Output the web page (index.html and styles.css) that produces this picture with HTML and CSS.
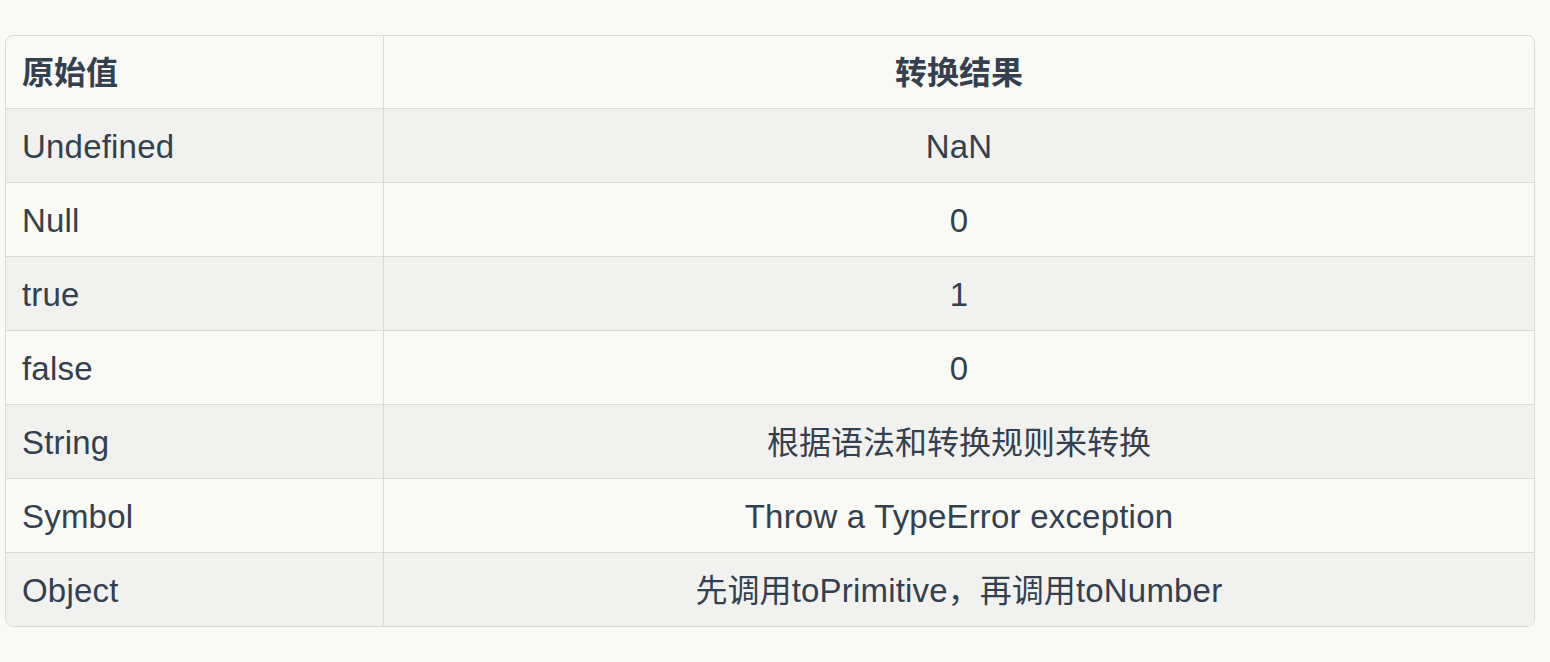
FILE: index.html
```html
<!DOCTYPE html>
<html lang="zh">
<head>
<meta charset="utf-8">
<link rel="stylesheet" href="styles.css">
</head>
<body>
<div class="page">
  <table class="conv">
    <thead>
      <tr><th class="c1"><span class="zh">原始值</span></th><th class="c2"><span class="zh">转换结果</span></th></tr>
    </thead>
    <tbody>
      <tr><td>Undefined</td><td class="c2">NaN</td></tr>
      <tr><td>Null</td><td class="c2">0</td></tr>
      <tr><td>true</td><td class="c2">1</td></tr>
      <tr><td>false</td><td class="c2">0</td></tr>
      <tr><td>String</td><td class="c2"><span class="zh">根据语法和转换规则来转换</span></td></tr>
      <tr><td>Symbol</td><td class="c2">Throw a TypeError exception</td></tr>
      <tr><td>Object</td><td class="c2"><span class="zh">先调用</span>toPrimitive<span class="zh">，再调用</span>toNumber</td></tr>
    </tbody>
  </table>
</div>
</body>
</html>
```
FILE: styles.css
```css
html, body {
  margin: 0;
  padding: 0;
  background: #f9f9f6;
}
.page {
  padding: 35px 15px 0 5px;
  font-family: "Liberation Sans", "Noto Sans CJK SC", sans-serif;
  color: #34404e;
}
.conv {
  width: 1530px;
  border-collapse: separate;
  border-spacing: 0;
  border: 1px solid #dadad6;
  border-radius: 8px;
  overflow: hidden;
  table-layout: fixed;
}
.conv th, .conv td {
  font-size: 33px;
  line-height: 49px;
  padding: 13px 16px 11px;
  text-align: left;
  border-bottom: 1px solid #dadad6;
  white-space: nowrap;
  letter-spacing: 0.2px;
}
.conv th {
  font-weight: bold;
  padding: 12px 16px 11px;
}
.conv tr > :first-child {
  border-right: 1px solid #dadad6;
}
.conv tbody tr:last-child td {
  border-bottom: none;
}
.conv .c1 { width: 345px; }
.conv .c2 { text-align: center; }
.conv tbody tr:nth-child(odd) td { background: #f1f2f0; }
.conv tbody tr:nth-child(even) td { background: #f9f9f6; }
.zh {
  font-family: "Noto Sans CJK SC", sans-serif;
  font-size: 32px;
  line-height: 1;
  letter-spacing: 0;
}
```
